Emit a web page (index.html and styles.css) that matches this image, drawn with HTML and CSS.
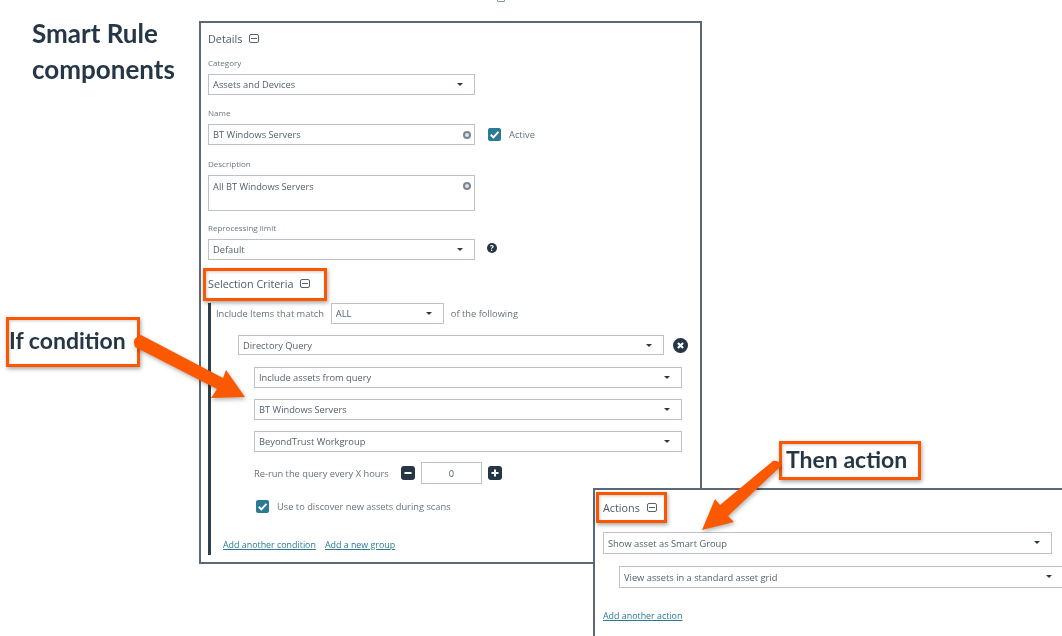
FILE: index.html
```html
<!DOCTYPE html>
<html lang="en">
<head>
  <meta charset="UTF-8">
  <title>Smart Rule components</title>
  <link rel="stylesheet" href="styles.css">
</head>
<body>
  <div class="canvas">
    <div class="crop-mark"></div>

    <h1 class="title">Smart Rule<br>components</h1>

    <!-- Rule form -->
    <div class="panel rule-panel">
      <div class="section-title">Details <span class="collapse"></span></div>

      <div class="field-label">Category</div>
      <div class="select w-267">Assets and Devices<span class="caret"></span></div>

      <div class="field-label gap-name">Name</div>
      <div class="row">
        <div class="select w-267">BT Windows Servers<span class="clear"></span></div>
        <span class="checkbox active-box"><svg viewBox="0 0 12 12"><path d="M2.6 6.2 5 8.6 9.6 3.6" /></svg></span>
        <span class="text">Active</span>
      </div>

      <div class="field-label gap-desc">Description</div>
      <div class="select textarea w-267">All BT Windows Servers<span class="clear"></span></div>

      <div class="field-label gap-limit">Reprocessing limit</div>
      <div class="row">
        <div class="select w-267">Default<span class="caret"></span></div>
        <span class="help">?</span>
      </div>

      <div class="section-title criteria-title">Selection Criteria <span class="collapse"></span></div>

      <div class="criteria">
        <div class="row">
          <span class="text">Include Items that match</span>
          <div class="select match-select">ALL<span class="caret"></span></div>
          <span class="text">of the following</span>
        </div>

        <div class="row query-row">
          <div class="select query-select">Directory Query<span class="caret"></span></div>
          <span class="remove"><svg viewBox="0 0 14 14"><path d="M4.6 4.6 9.4 9.4M9.4 4.6 4.6 9.4" /></svg></span>
        </div>

        <div class="sub-rows">
          <div class="select">Include assets from query<span class="caret"></span></div>
          <div class="select">BT Windows Servers<span class="caret"></span></div>
          <div class="select">BeyondTrust Workgroup<span class="caret"></span></div>

          <div class="row rerun">
            <span class="text">Re-run the query every X hours</span>
            <span class="stepper"><svg viewBox="0 0 14 14"><path d="M3.5 7h7" /></svg></span>
            <div class="select number">0</div>
            <span class="stepper"><svg viewBox="0 0 14 14"><path d="M3.5 7h7M7 3.5v7" /></svg></span>
          </div>

          <div class="row discover">
            <span class="checkbox"><svg viewBox="0 0 12 12"><path d="M2.6 6.2 5 8.6 9.6 3.6" /></svg></span>
            <span class="text">Use to discover new assets during scans</span>
          </div>
        </div>

        <div class="links">
          <a class="link" href="#">Add another condition</a>
          <a class="link" href="#">Add a new group</a>
        </div>
      </div>
    </div>

    <!-- Actions form -->
    <div class="panel actions-panel">
      <div class="section-title">Actions <span class="collapse"></span></div>
      <div class="select action-select">Show asset as Smart Group<span class="caret"></span></div>
      <div class="select view-select">View assets in a standard asset grid<span class="caret"></span></div>
      <a class="link action-link" href="#">Add another action</a>
    </div>

    <!-- Callouts on top of the screenshots -->
    <div class="callout-box box-criteria"></div>
    <div class="callout-box box-actions"></div>
    <div class="callout-box callout-if">If condition</div>
    <div class="callout-box callout-then">Then action</div>

    <svg class="arrows" viewBox="0 0 1062 636">
      <path d="M141 335 223 378 226 370 245 397 211 398 217 389 135 347Q131 338 141 335Z" />
      <path d="M773 461Q779 460 781 466L728 516 734 522 702 530 715 499 720 505Z" />
    </svg>
  </div>
</body>
</html>
```

FILE: styles.css
```css
body {
  margin: 0;
  background-color: white;
  font-family: 'Open Sans', sans-serif;
  color: #3f4d59;
}
.canvas {
  position: relative;
  width: 1062px;
  height: 636px;
  overflow: hidden;
  background-color: white;
  filter: blur(0.35px);
}
.crop-mark {
  position: absolute;
  left: 497px;
  top: -6px;
  width: 6px;
  height: 6px;
  border: 1px solid #8a949c;
  border-radius: 1px;
}
.title {
  position: absolute;
  left: 32px;
  top: 15px;
  margin: 0;
  font-family: 'Lato', sans-serif;
  font-size: 26px;
  font-weight: 700;
  line-height: 36px;
  color: #253746;
}

/* Panels */
.panel {
  position: absolute;
  box-sizing: border-box;
  background-color: white;
  border: 2px solid #5a6975;
}
.rule-panel {
  left: 199px;
  top: 21px;
  width: 503px;
  height: 543px;
  padding: 7px 0 0 7px;
}
.actions-panel {
  left: 593px;
  top: 488px;
  width: 500px;
  height: 170px;
  border-bottom: none;
  padding: 9px 0 0 8px;
}
.section-title {
  display: flex;
  align-items: center;
  gap: 5px;
  height: 16px;
  font-size: 10.8px;
  color: #4c5a65;
}
.collapse {
  position: relative;
  box-sizing: border-box;
  width: 10px;
  height: 9px;
  margin-left: 2px;
  border: 1px solid #55636e;
  border-radius: 2px;
}
.collapse::after {
  content: '';
  position: absolute;
  left: 1px;
  right: 1px;
  top: 3px;
  height: 1px;
  background-color: #55636e;
}
.field-label {
  margin-top: 11px;
  margin-bottom: 6px;
  height: 11px;
  line-height: 11px;
  font-size: 8px;
  color: #6a7680;
}
.gap-name { margin-top: 12px; }
.gap-desc { margin-top: 13px; }
.gap-limit { margin-top: 11px; }

.select {
  position: relative;
  box-sizing: border-box;
  display: flex;
  align-items: center;
  height: 21px;
  padding-left: 4px;
  border: 1px solid #bcc2c8;
  font-size: 9.3px;
  color: #54616c;
  background-color: white;
}
.w-267 { width: 267px; }
.textarea {
  align-items: flex-start;
  height: 36px;
  padding-top: 4px;
}
.caret {
  position: absolute;
  right: 11px;
  top: 8px;
  border-left: 3.5px solid transparent;
  border-right: 3.5px solid transparent;
  border-top: 3.5px solid #2b3a46;
}
.clear {
  position: absolute;
  right: 3px;
  top: 6px;
  box-sizing: border-box;
  width: 8px;
  height: 8px;
  border: 2px solid #7c8790;
  border-radius: 50%;
  background-color: #dfe2e4;
}
.row {
  display: flex;
  align-items: center;
}
.text {
  font-size: 9.3px;
  color: #66727c;
}
.checkbox {
  box-sizing: border-box;
  display: block;
  width: 13px;
  height: 13px;
  border-radius: 2px;
  background-color: #2a7a96;
  flex: none;
}
.checkbox svg {
  display: block;
  fill: none;
  stroke: white;
  stroke-width: 1.8;
}
.active-box {
  margin: 0 8px 0 13px;
}
.help {
  width: 10px;
  height: 10px;
  margin: -3px 0 0 12px;
  border-radius: 50%;
  background-color: #253746;
  color: white;
  font-size: 8px;
  font-weight: 700;
  line-height: 10px;
  text-align: center;
}

/* Selection criteria */
.criteria-title {
  margin-top: 15px;
}
.criteria {
  box-sizing: border-box;
  width: 480px;
  height: 252px;
  margin-top: 12px;
  padding: 0 0 0 5px;
  border-left: 3px solid #2e3f4d;
}
.match-select {
  flex: none;
  width: 113px;
  margin: 0 7px 0 7px;
}
.query-row {
  margin: 11px 0 0 22px;
}
.query-select {
  width: 427px;
  height: 20px;
}
.remove {
  width: 15px;
  height: 15px;
  margin-left: 9px;
  border-radius: 50%;
  background-color: #253746;
}
.remove svg, .stepper svg {
  display: block;
  fill: none;
  stroke: white;
  stroke-width: 2;
}
.sub-rows {
  display: flex;
  flex-direction: column;
  gap: 11px;
  width: 428px;
  margin: 12px 0 0 38px;
}
.rerun {
  gap: 6px;
  margin-top: -1px;
}
.rerun .text {
  width: 141px;
}
.stepper {
  width: 14px;
  height: 14px;
  border-radius: 3px;
  background-color: #253746;
}
.number {
  justify-content: center;
  width: 61px;
  height: 22px;
  padding: 0;
}
.discover {
  gap: 8px;
  margin: 5px 0 0 2px;
}
.links {
  display: flex;
  gap: 9px;
  margin: 25px 0 0 7px;
}
.link {
  font-size: 8.9px;
  color: #2a7a96;
  text-decoration: underline;
}

/* Actions */
.action-select {
  width: 449px;
  margin-top: 17px;
  height: 22px;
}
.view-select {
  width: 445px;
  height: 22px;
  margin: 12px 0 0 16px;
}
.action-link {
  display: block;
  margin-top: 21px;
}

/* Callouts */
.callout-box {
  position: absolute;
  box-sizing: border-box;
  border: 3px solid #f95800;
  box-shadow: 1px 2px 4px rgba(0, 0, 0, 0.35), inset 1px 1px 3px rgba(0, 0, 0, 0.2);
  font-family: 'Lato', sans-serif;
  font-size: 23px;
  font-weight: 700;
  color: #253746;
}
.box-criteria {
  left: 203px;
  top: 268px;
  width: 124px;
  height: 33px;
}
.box-actions {
  left: 596px;
  top: 492px;
  width: 71px;
  height: 31px;
}
.callout-if {
  left: 6px;
  top: 317px;
  width: 134px;
  height: 50px;
  padding: 6px 0 0 0;
  background-color: white;
}
.callout-then {
  left: 779px;
  top: 441px;
  width: 142px;
  height: 39px;
  padding: 1px 0 0 4px;
  background-color: white;
}
.arrows {
  position: absolute;
  left: 0;
  top: 0;
  width: 1062px;
  height: 636px;
  fill: #fb5800;
  filter: drop-shadow(1px 2px 2px rgba(0, 0, 0, 0.3));
  pointer-events: none;
}
```
